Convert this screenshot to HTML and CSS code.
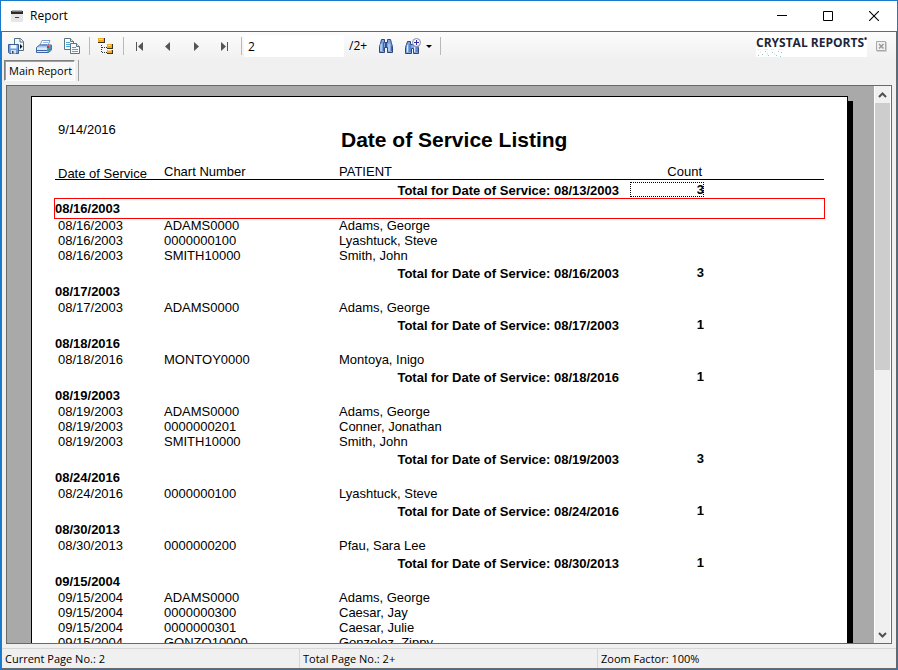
FILE: index.html
```html
<!DOCTYPE html>
<html lang="en">
<head>
    <meta charset="UTF-8">
    <meta name="viewport" content="width=device-width, initial-scale=1.0">
    <title>Report</title>
    <link rel="stylesheet" href="styles.css">
</head>
<body>
    <header class="title-bar">
        <svg class="app-icon" width="14" height="14" viewBox="0 0 14 14">
            <path d="M1 4h12v8q0 1-1 1H2q-1 0-1-1z" fill="#e6e6e6"/>
            <path d="M2 1h10l1 3H1z" fill="#b4b4b4"/>
            <path d="M1 2h12v3H1z" fill="#2b2b2b"/>
            <path d="M2 2h10v1H2z" fill="#777"/>
            <path d="M5 8h4v1H5z" fill="#444"/>
        </svg>
        <h1>Report</h1>
        <div class="window-buttons">
            <button type="button" aria-label="Minimize">
                <svg width="10" height="10" viewBox="0 0 10 10"><path d="M0 4.500h10" stroke="#000"/></svg>
            </button>
            <button type="button" aria-label="Maximize">
                <svg width="10" height="10" viewBox="0 0 10 10"><path d="M.5.5h9v9h-9z" fill="none" stroke="#000"/></svg>
            </button>
            <button type="button" aria-label="Close">
                <svg width="10" height="10" viewBox="0 0 10 10"><path d="M0 0l10 10M10 0L0 10" stroke="#000" stroke-width="1.1"/></svg>
            </button>
        </div>
    </header>

    <main class="client">
        <div class="toolbar">
            <button type="button" class="tool" aria-label="Export report">
                <svg width="16" height="16" viewBox="0 0 16 16">
                    <path d="M6.500 .5h6l3 3v9h-9z" fill="#eef7fd" stroke="#56707c"/>
                    <path d="M12 .5v3.500h3.500" fill="#fff" stroke="#56707c"/>
                    <path d="M12 6l2.500 2.500-2.500 2.500z" fill="#111"/>
                    <path d="M.5 6.500h10v9h-9l-1-1z" fill="#6f9fd6" stroke="#365f9e"/>
                    <path d="M2.500 7h6v3.500h-6z" fill="#f3f8ff"/>
                    <path d="M3 12h5v3.500H3z" fill="#d5e2f2"/>
                    <path d="M4 13h1.500v2.500H4z" fill="#28477c"/>
                </svg>
            </button>
            <button type="button" class="tool" aria-label="Print report">
                <svg width="16" height="16" viewBox="0 0 16 16">
                    <path d="M6 2.500h8l-2.500 6H3.500z" fill="#fff" stroke="#7c9cc9"/>
                    <path d="M7 4.500h5M6 6.500h5" stroke="#9bb8de"/>
                    <path d="M.5 9.500l3-2.500h12v5l-3 2.500H.5z" fill="#a9c6ee" stroke="#3c62a8"/>
                    <path d="M1 9.500h10.500v4.500H1z" fill="#dce9fa"/>
                    <path d="M1 12.500h10.500" stroke="#3c62a8"/>
                    <path d="M11.500 9.500l4-2.500v5l-4 2.500z" fill="#5d83c9"/>
                    <path d="M11 8h2v2h-2z" fill="#e02a1a"/>
                    <path d="M11 10.500h2v2h-2z" fill="#20c928"/>
                </svg>
            </button>
            <button type="button" class="tool" aria-label="Copy">
                <svg width="16" height="16" viewBox="0 0 16 16">
                    <path d="M.5 .5h6l3 3v8h-9z" fill="#fff" stroke="#5d7380"/>
                    <path d="M6.500 .5v3h3" fill="#dceaf3" stroke="#5d7380"/>
                    <path d="M2 4.500h4M2 6.500h5M2 8.500h5" stroke="#45a8dc"/>
                    <path d="M6.500 5.500h6l3 3v7h-9z" fill="#f5fbff" stroke="#5d7380"/>
                    <path d="M12.500 5.500v3h3" fill="#dceaf3" stroke="#5d7380"/>
                    <path d="M8 9.500h4M8 11.500h6M8 13.500h6" stroke="#45a8dc"/>
                </svg>
            </button>
            <span class="separator"></span>
            <button type="button" class="tool" aria-label="Toggle group tree">
                <svg width="16" height="16" viewBox="0 0 16 16">
                    <path d="M3.500 7v7.500H9M4 9.500h5" fill="none" stroke="#333" stroke-dasharray="1 1"/>
                    <path d="M0 0h7v5H0zM9 6h6v5H9zM9 12h6v4H9z" fill="#3d3423"/>
                    <path d="M0 0h6v4H0zM9 6h5v4H9zM9 12h5v3H9z" fill="#f2a91d"/>
                    <path d="M1 1h4v1H1zM10 7h3v1h-3zM10 12h3v1h-3z" fill="#ffdf86"/>
                </svg>
            </button>
            <span class="separator"></span>
            <button type="button" class="nav" aria-label="First page">
                <svg width="8" height="9" viewBox="0 0 8 9"><path d="M.5 0v9" stroke="#555"/><path d="M7 0v9L2 4.500z" fill="#555"/></svg>
            </button>
            <button type="button" class="nav" aria-label="Previous page">
                <svg width="8" height="9" viewBox="0 0 8 9"><path d="M6 0v9L1 4.500z" fill="#555"/></svg>
            </button>
            <button type="button" class="nav" aria-label="Next page">
                <svg width="8" height="9" viewBox="0 0 8 9"><path d="M2 0v9l5-4.500z" fill="#555"/></svg>
            </button>
            <button type="button" class="nav" aria-label="Last page">
                <svg width="8" height="9" viewBox="0 0 8 9"><path d="M1 0v9l5-4.500z" fill="#555"/><path d="M7.500 0v9" stroke="#555"/></svg>
            </button>
            <span class="separator"></span>
            <input class="page-input" id="page" type="text" value="2">
            <label class="page-total" for="page">/2+</label>
            <button type="button" class="tool" aria-label="Find text">
                <svg width="16" height="16" viewBox="0 0 16 16">
                    <path d="M3.500 1.500h3v3h3v-3h3l1 4 1 3v6h-5v-5h-3v5h-5v-6l1-3z" fill="#7da7de" stroke="#30457f"/>
                    <path d="M3 6v7M11 6v7" stroke="#d9eaff"/>
                    <path d="M5.500 4v9M13.500 8v5" stroke="#3d68b4"/>
                    <path d="M7 5h2v4H7z" fill="#3c4e89"/>
                </svg>
            </button>
            <button type="button" class="tool zoom" aria-label="Zoom">
                <svg width="16" height="16" viewBox="0 0 16 16">
                    <path d="M2.500 3.500h3v3h3v-2h3l1 3 1 2v6h-5v-5h-2v5h-6v-6l1-3z" fill="#7da7de" stroke="#30457f"/>
                    <path d="M2.500 7v7M9.500 9v5" stroke="#d9eaff"/>
                    <path d="M5 6v8M12 9v5" stroke="#3d68b4"/>
                    <circle cx="11.500" cy="4.500" r="4" fill="#f5f5ff" stroke="#8b8b95"/>
                    <path d="M11.500 2v5M9 4.500h5" stroke="#2c2cb0"/>
                </svg>
                <svg width="6" height="3" viewBox="0 0 6 3"><path d="M0 0h6L3 3z" fill="#000"/></svg>
            </button>
            <span class="separator"></span>
            <div class="brand">
                <span class="brand-name">CRYSTAL REPORTS<sup>•</sup></span>
                <svg width="28" height="9" viewBox="0 0 28 9">
                    <path d="M2 7h1v1H2zM6 6h1v1H6zM9 3h1v1H9zM12 7h1v1h-1zM16 4h1v1h-1zM20 7h1v1h-1zM22 3h1v1h-1zM25 4h1v1h-1zM24 8h1v1h-1z" fill="#8ccbd0"/>
                    <path d="M1 1h4v1H1zM4 3h1v2H4zM8 1h4v1H8zM11 4h1v3h-1zM15 1h3v1h-3zM18 5h1v2h-1zM22 1h4v1h-4z" fill="#ededed"/>
                </svg>
            </div>
            <button type="button" class="close-view" aria-label="Close view">
                <svg width="11" height="11" viewBox="0 0 11 11">
                    <path d="M.5.5h9v9h-9z" fill="#f0f0f0" stroke="#a8a8a8"/>
                    <path d="M10.500 1v9.500H1" fill="none" stroke="#cfcfcf"/>
                    <path d="M3 3l4.500 4.500M7.500 3L3 7.500" stroke="#999" stroke-width="1.500"/>
                </svg>
            </button>
        </div>

        <div class="tabs">
            <button type="button" class="tab">Main Report</button>
            <span class="separator"></span>
        </div>

        <div class="viewer">
            <div class="canvas">
                <article class="page">
                    <div class="page-head">
                        <p class="print-date">9/14/2016</p>
                        <h2>Date of Service Listing</h2>
                    </div>
                    <table class="listing">
                        <colgroup>
                            <col class="col-date">
                            <col class="col-chart">
                            <col class="col-patient">
                            <col class="col-count">
                            <col>
                        </colgroup>
                        <thead>
                            <tr><th class="low">Date of Service</th><th>Chart Number</th><th>PATIENT</th><th class="count">Count</th><th></th></tr>
                        </thead>
                        <tbody>
                            <tr class="total first"><td colspan="3">Total for Date of Service: 08/13/2003</td><td class="count"><span class="field">3</span></td><td></td></tr>
                        </tbody>
                        <tbody>
                            <tr class="group selected"><th colspan="5">08/16/2003</th></tr>
                            <tr><td>08/16/2003</td><td>ADAMS0000</td><td>Adams, George</td><td></td><td></td></tr>
                            <tr><td>08/16/2003</td><td>0000000100</td><td>Lyashtuck, Steve</td><td></td><td></td></tr>
                            <tr><td>08/16/2003</td><td>SMITH10000</td><td>Smith, John</td><td></td><td></td></tr>
                            <tr class="total"><td colspan="3">Total for Date of Service: 08/16/2003</td><td class="count">3</td><td></td></tr>
                        </tbody>
                        <tbody>
                            <tr class="group"><th colspan="5">08/17/2003</th></tr>
                            <tr><td>08/17/2003</td><td>ADAMS0000</td><td>Adams, George</td><td></td><td></td></tr>
                            <tr class="total"><td colspan="3">Total for Date of Service: 08/17/2003</td><td class="count">1</td><td></td></tr>
                        </tbody>
                        <tbody>
                            <tr class="group"><th colspan="5">08/18/2016</th></tr>
                            <tr><td>08/18/2016</td><td>MONTOY0000</td><td>Montoya, Inigo</td><td></td><td></td></tr>
                            <tr class="total"><td colspan="3">Total for Date of Service: 08/18/2016</td><td class="count">1</td><td></td></tr>
                        </tbody>
                        <tbody>
                            <tr class="group"><th colspan="5">08/19/2003</th></tr>
                            <tr><td>08/19/2003</td><td>ADAMS0000</td><td>Adams, George</td><td></td><td></td></tr>
                            <tr><td>08/19/2003</td><td>0000000201</td><td>Conner, Jonathan</td><td></td><td></td></tr>
                            <tr><td>08/19/2003</td><td>SMITH10000</td><td>Smith, John</td><td></td><td></td></tr>
                            <tr class="total"><td colspan="3">Total for Date of Service: 08/19/2003</td><td class="count">3</td><td></td></tr>
                        </tbody>
                        <tbody>
                            <tr class="group"><th colspan="5">08/24/2016</th></tr>
                            <tr><td>08/24/2016</td><td>0000000100</td><td>Lyashtuck, Steve</td><td></td><td></td></tr>
                            <tr class="total"><td colspan="3">Total for Date of Service: 08/24/2016</td><td class="count">1</td><td></td></tr>
                        </tbody>
                        <tbody>
                            <tr class="group"><th colspan="5">08/30/2013</th></tr>
                            <tr><td>08/30/2013</td><td>0000000200</td><td>Pfau, Sara Lee</td><td></td><td></td></tr>
                            <tr class="total"><td colspan="3">Total for Date of Service: 08/30/2013</td><td class="count">1</td><td></td></tr>
                        </tbody>
                        <tbody>
                            <tr class="group"><th colspan="5">09/15/2004</th></tr>
                            <tr><td>09/15/2004</td><td>ADAMS0000</td><td>Adams, George</td><td></td><td></td></tr>
                            <tr><td>09/15/2004</td><td>0000000300</td><td>Caesar, Jay</td><td></td><td></td></tr>
                            <tr><td>09/15/2004</td><td>0000000301</td><td>Caesar, Julie</td><td></td><td></td></tr>
                            <tr><td>09/15/2004</td><td>GONZO10000</td><td>Gonzolez, Zippy</td><td></td><td></td></tr>
                        </tbody>
                    </table>
                </article>
            </div>
            <div class="scrollbar">
                <button type="button" aria-label="Scroll up">
                    <svg width="9" height="6" viewBox="0 0 9 6"><path d="M1 5l3.500-3.500L8 5" fill="none" stroke="#505050" stroke-width="2"/></svg>
                </button>
                <div class="track"><div class="thumb"></div></div>
                <button type="button" aria-label="Scroll down">
                    <svg width="9" height="6" viewBox="0 0 9 6"><path d="M1 1l3.500 3.500L8 1" fill="none" stroke="#505050" stroke-width="2"/></svg>
                </button>
            </div>
        </div>

        <footer class="status-bar">
            <span>Current Page No.: 2</span>
            <span>Total Page No.: 2+</span>
            <span>Zoom Factor: 100%</span>
        </footer>
    </main>
</body>
</html>
```
FILE: styles.css
```css
:root {
    --accent: #1979ca;
    --face: #f0f0f0;
    --edge: #696969;
    --line: #b9b9b9;
    --ui-font: "Open Sans", "Segoe UI", Tahoma, sans-serif;
    --report-font: "Liberation Sans", Arial, sans-serif;
}

* {
    margin: 0;
    padding: 0;
    box-sizing: border-box;
}

body {
    display: flex;
    flex-direction: column;
    height: 100vh;
    overflow: hidden;
    border: 1px solid var(--accent);
    background: #fff;
    color: #000;
    font: 11px/16px var(--ui-font);
}

button {
    display: flex;
    align-items: center;
    justify-content: center;
    border: none;
    background: none;
    color: inherit;
    font: inherit;
}

svg {
    display: block;
    flex: none;
}

/* Title bar */
.title-bar {
    display: flex;
    align-items: center;
    flex: none;
    height: 30px;
    padding-left: 9px;
}

.title-bar h1 {
    margin-left: 6px;
    font-size: 12px;
    font-weight: normal;
}

.window-buttons {
    display: flex;
    margin-left: auto;
}

.window-buttons button {
    width: 46px;
    height: 28px;
}

.client {
    display: flex;
    flex-direction: column;
    flex: 1;
    min-height: 0;
    border: 1px solid var(--edge);
    background: var(--face);
}

/* Toolbar */
.toolbar {
    display: flex;
    align-items: center;
    flex: none;
    height: 28px;
    padding-right: 9px;
    background: linear-gradient(#fcfcfc, var(--face));
}

.separator {
    flex: none;
    width: 1px;
    height: 18px;
    background: var(--line);
}

.tool,
.nav {
    width: 28px;
    height: 24px;
}

.toolbar .separator {
    margin: 0 2px 0 3px;
}

.page-input {
    width: 100px;
    height: 22px;
    padding: 0 4px;
    border: none;
    background: #fff;
    font: 12px/16px var(--ui-font);
}

.page-total {
    width: 28px;
    padding-left: 5px;
    font-size: 12px;
    white-space: nowrap;
}

.tool.zoom {
    gap: 5px;
    width: 37px;
}

.brand {
    margin: 0 9px 0 auto;
    background: #fff;
    color: #1f2538;
    font: bold 12px/11px "Open Sans", sans-serif;
    white-space: nowrap;
}

.brand-name {
    display: block;
}

.brand sup {
    font-size: 8px;
    line-height: 1;
}

/* Tabs */
.tabs {
    display: flex;
    flex: none;
    height: 25px;
    padding-left: 2px;
}

.tab {
    height: 21px;
    padding: 0 2px 0 4px;
    border: 1px solid;
    border-color: #808080 #fff #fff #808080;
    background: #f8f8f8;
    box-shadow: inset 1px 1px #a0a0a0;
}

.tabs .separator {
    height: 21px;
    margin-left: 3px;
    background: #a0a0a0;
}

/* Report viewer */
.viewer {
    display: flex;
    flex: 1;
    min-height: 0;
    margin: 0 4px 4px;
    border: 1px solid var(--edge);
}

.canvas {
    flex: 1;
    overflow: hidden;
    padding: 10px 26px 0 24px;
    background: #a9a9a9;
}

.page {
    min-height: 1056px;
    padding: 25px 23px;
    border: 1px solid #000;
    background: #fff;
    box-shadow: 5px 5px #000;
    font: 13px/15px var(--report-font);
}

.page-head {
    display: flex;
    height: 44px;
}

.print-date {
    width: 286px;
    padding-left: 3px;
}

.page-head h2 {
    padding-top: 6px;
    font-size: 21px;
    line-height: 24px;
    white-space: nowrap;
}

.listing {
    width: 100%;
    border-collapse: collapse;
    table-layout: fixed;
}

.col-date {
    width: 109px;
}

.col-chart {
    width: 175px;
}

.col-patient {
    width: 280px;
}

.col-count {
    width: 85px;
}

.listing th {
    font-weight: normal;
    text-align: left;
}

.listing td:first-child,
.listing thead th:first-child {
    padding-left: 3px;
}

.listing thead th {
    height: 13px;
    border-bottom: 1px solid #000;
    vertical-align: top;
    line-height: 11px;
}

.listing thead .low {
    vertical-align: bottom;
}

.listing .count {
    text-align: right;
}

.listing thead .count {
    padding-right: 2px;
}

.listing .total td {
    height: 19px;
    padding-top: 2px;
    font-weight: bold;
    text-align: right;
}

.listing .total .count {
    padding-top: 0;
}

.listing .first td {
    height: 20px;
}

.listing .group th {
    height: 18px;
    font-weight: bold;
}

.listing .selected th {
    height: 19px;
}

.listing .selected {
    outline: 1px solid #f00;
}

.field {
    display: block;
    margin-left: 11px;
    outline: 1px dotted #000;
    outline-offset: -1px;
}

/* Scroll bar */
.scrollbar {
    display: flex;
    flex-direction: column;
    width: 17px;
    border: solid #fff;
    border-width: 0 1px;
    background: var(--face);
}

.scrollbar button {
    width: 15px;
    height: 17px;
}

.track {
    flex: 1;
}

.thumb {
    height: 51%;
    background: #cdcdcd;
}

/* Status bar */
.status-bar {
    display: grid;
    grid-template-columns: repeat(3, 1fr);
    flex: none;
    height: 20px;
    border-top: 1px solid #d7d7d7;
}

.status-bar span {
    padding: 2px 3px 0;
    border-right: 1px solid #d7d7d7;
}

.status-bar span:last-child {
    border-right: none;
}
```
